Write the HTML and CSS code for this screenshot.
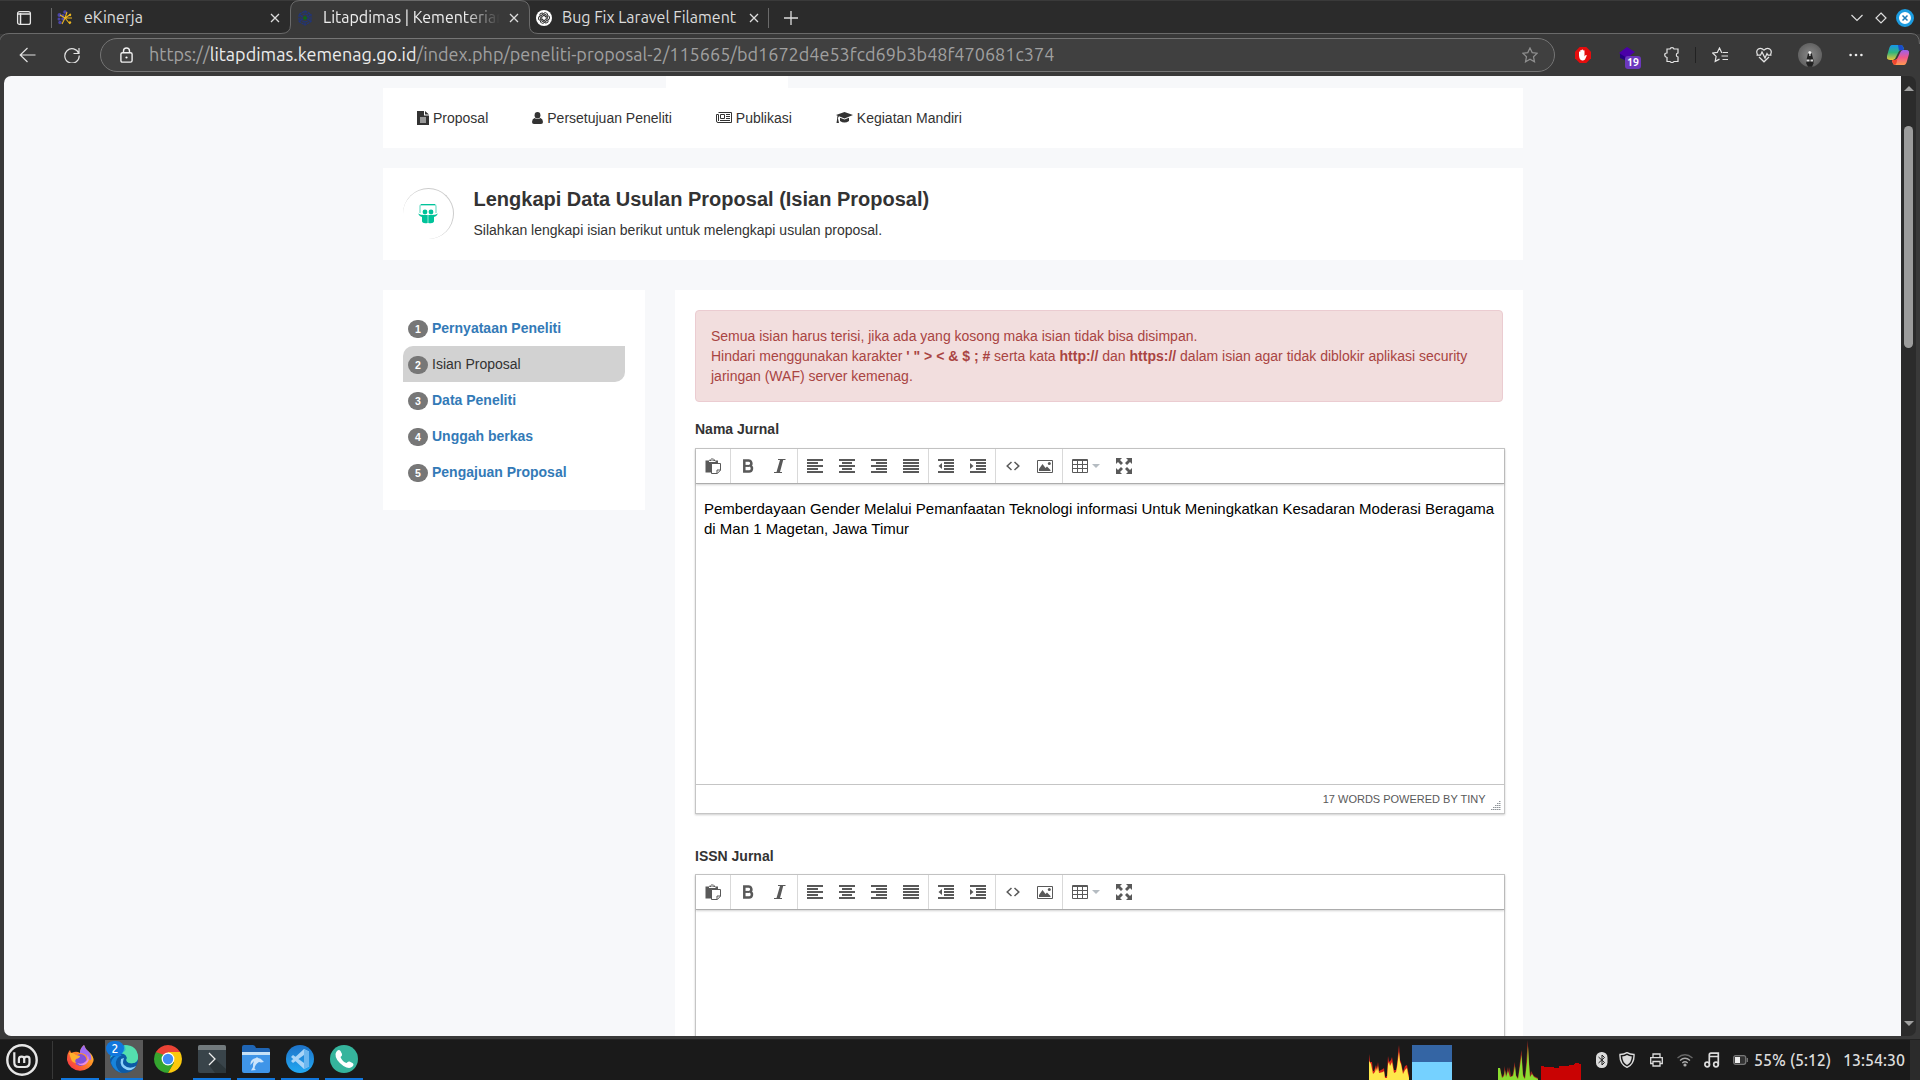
FILE: index.html
```html
<!DOCTYPE html>
<html lang="id">
<head>
<meta charset="utf-8">
<title>Litapdimas | Kementerian</title>
<link rel="stylesheet" href="styles.css">
</head>
<body>
<svg class="defs" width="0" height="0">
  <defs>
    <symbol id="x" viewBox="0 0 10 10"><path d="M1 1l8 8M9 1L1 9" stroke="#ddd" stroke-width="1.3" fill="none"/></symbol>
    <symbol id="paste" viewBox="0 0 16 16"><path d="M.5 2.500h4v-1H6V.5h2.500v1H10v1h3V6H7.500v8.500H.5z" fill="#595959"/><path d="M4 3.500h6.500M6 2h2.500" stroke="#fff"/><path d="M6.500 5.500h9v6.700L12.300 15.500H6.500z" fill="#fff" stroke="#595959"/><path d="M12 15.500V12h3.500" fill="none" stroke="#595959"/></symbol>
    <symbol id="bold" viewBox="0 0 16 16"><path d="M4.300 2.500H8.500a2.800 2.800 0 0 1 1.500 5.200 3 3 0 0 1-1.300 5.800H4.300z M4 13.500" fill="none" stroke="#595959" stroke-width="2.500"/><path d="M4 7.900h5" stroke="#595959" stroke-width="2"/></symbol>
    <symbol id="italic" viewBox="0 0 16 16"><path d="M6 1h7.500v1h-2.300L8 14h2v1H2v-1h2.500L8 2H6z" fill="#595959"/></symbol>
    <symbol id="al" viewBox="0 0 16 16"><path d="M0 2h16M0 5h11M0 8h16M0 11h11M0 14h16" stroke="#595959" stroke-width="2"/></symbol>
    <symbol id="ac" viewBox="0 0 16 16"><path d="M0 2h16M3 5h10M0 8h16M3 11h10M0 14h16" stroke="#595959" stroke-width="2"/></symbol>
    <symbol id="ar" viewBox="0 0 16 16"><path d="M0 2h16M5 5h11M0 8h16M5 11h11M0 14h16" stroke="#595959" stroke-width="2"/></symbol>
    <symbol id="aj" viewBox="0 0 16 16"><path d="M0 2h16M0 5h16M0 8h16M0 11h16M0 14h16" stroke="#595959" stroke-width="2"/></symbol>
    <symbol id="out" viewBox="0 0 16 16"><path d="M0 2h16M6 5h10M6 8h10M6 11h10M0 14h16" stroke="#595959" stroke-width="2"/><path d="M4 5v6L.5 8z" fill="#595959"/></symbol>
    <symbol id="in" viewBox="0 0 16 16"><path d="M0 2h16M6 5h10M6 8h10M6 11h10M0 14h16" stroke="#595959" stroke-width="2"/><path d="M0 5v6l3.500-3z" fill="#595959"/></symbol>
    <symbol id="code" viewBox="0 0 16 16"><path d="M6.500 4L2.200 8l4.300 4M9.500 4l4.300 4-4.300 4" fill="none" stroke="#595959" stroke-width="1.500"/></symbol>
    <symbol id="img" viewBox="0 0 16 16"><path d="M.5 2.500h15v12H.5z" fill="none" stroke="#595959"/><path d="M2 13V11l3.500-5 3 4 1.500-1.500 3.500 3.500V13z" fill="#595959"/><circle cx="12.300" cy="5.500" r="1.500" fill="#595959"/></symbol>
    <symbol id="tbl" viewBox="0 0 16 16"><path d="M.5 1.500h15v13H.5zM.5 2.500h15M.5 6.500h15M.5 10.500h15M5.500 2v12M10.500 2v12" fill="none" stroke="#595959"/></symbol>
    <symbol id="full" viewBox="0 0 16 16"><path d="M0 0h6L4 2l3 3-2 2-3-3-2 2zM16 0v6l-2-2-3 3-2-2 3-3-2-2zM0 16v-6l2 2 3-3 2 2-3 3 2 2zM16 16h-6l2-2-3-3 2-2 3 3 2-2z" fill="#595959"/></symbol>
  </defs>
</svg>

<div class="desktop">
  <header class="tabs">
    <svg class="tab-shape" width="1920" height="44" viewBox="0 0 1920 44"><path d="M-1 44V42Q1 33.500 9 33.500H281Q290.500 33.500 290.500 25V10Q290.500 .5 300 .5H520Q529.500 .5 529.500 10V25Q529.500 33.500 538 33.500H1911Q1919.500 33.500 1919.500 44" fill="#393939" stroke="#6a6a6a"/></svg>
    <svg class="ic panel-ic" viewBox="0 0 16 16"><rect x="1.600" y="1.600" width="12.800" height="12.800" rx="2" fill="none" stroke="#e6e6e6" stroke-width="1.300"/><path d="M2 4h12M4.500 3v11" stroke="#e6e6e6" stroke-width="1.500"/></svg>
    <i class="vsep"></i>
    <svg class="ic kin" viewBox="0 0 16 16"><g fill="#4a45a8"><circle cx="2.500" cy="5" r="2"/><circle cx="2" cy="9" r="1.500"/><circle cx="3" cy="12.500" r="1.700"/><circle cx="8" cy="2" r="1.800"/><circle cx="6" cy="5.500" r="1.500"/><circle cx="6" cy="9" r="1.700"/></g><path d="M8 8l2-6M8 8l6-4M8 8h7M8 8l5 6M8 8l-3 6M8 8L3 5" stroke="#e9b320" stroke-width="1.100"/><circle cx="13" cy="5" r="1.200" fill="#e9b320"/><circle cx="13" cy="12.500" r="1.200" fill="#e9b320"/></svg>
    <span class="tab-t t1">eKinerja</span>
    <svg class="cl c1"><use href="#x"/></svg>
    <svg class="ic lit" viewBox="0 0 16 16"><g fill="none" stroke="#20357c" stroke-width="1.200" stroke-dasharray="2.500 .7"><path d="M8 1l6 3.500v7L8 15l-6-3.500v-7z"/><path d="M8 1v4M14 4.500L10 7M14 11.500L10 9M8 15v-4M2 11.500L6 9M2 4.500L6 7"/><circle cx="8" cy="8" r="4"/></g><circle cx="8" cy="8" r="1.800" fill="#096b18"/></svg>
    <span class="tab-t t2">Litapdimas | Kementerian</span>
    <svg class="cl c2"><use href="#x"/></svg>
    <svg class="ic gpt" viewBox="0 0 16 16"><circle cx="8" cy="8" r="8" fill="#fff"/><g fill="none" stroke="#222" stroke-width=".9"><path id="p" d="M8 3.100a2.300 2.300 0 0 1 3.600 2.200V8.500L8 10.500"/><use href="#p" transform="rotate(60 8 8)"/><use href="#p" transform="rotate(120 8 8)"/><use href="#p" transform="rotate(180 8 8)"/><use href="#p" transform="rotate(240 8 8)"/><use href="#p" transform="rotate(300 8 8)"/></g></svg>
    <span class="tab-t t3">Bug Fix Laravel Filament</span>
    <svg class="cl c3"><use href="#x"/></svg>
    <i class="vsep s2"></i>
    <svg class="plus" viewBox="0 0 14 14"><path d="M7 0v14M0 7h14" stroke="#ddd" stroke-width="1.300"/></svg>
    <div class="win">
      <svg width="12" height="8" viewBox="0 0 12 8"><path d="M.5 1L6 6.500 11.500 1" fill="none" stroke="#ddd" stroke-width="1.200"/></svg>
      <svg width="12" height="12" viewBox="0 0 12 12"><path d="M6 1l5 5-5 5-5-5z" fill="none" stroke="#ddd" stroke-width="1.200"/></svg>
      <svg class="close" width="18" height="18" viewBox="0 0 18 18"><circle cx="9" cy="9" r="7.500" fill="#fff" stroke="#1c9ce0" stroke-width="3"/><path d="M6.500 6.500l5 5M11.500 6.500l-5 5" stroke="#1c7cb8" stroke-width="1.500"/></svg>
    </div>
  </header>

  <div class="toolbar">
    <svg class="back" viewBox="0 0 17 16"><path d="M16.500 8H1.500M8.500 1L1.200 8l7.300 7" fill="none" stroke="#e2e2e2" stroke-width="1.200"/></svg>
    <svg class="reload" viewBox="0 0 16 16"><path d="M14.800 6.500A7.200 7.200 0 1 0 15.200 8.500M15 1v5.500H9.500" fill="none" stroke="#e2e2e2" stroke-width="1.200"/></svg>
    <div class="address">
      <svg class="lock" viewBox="0 0 13 16"><path d="M3.500 5V4a3 3 0 0 1 6 0v1M2.500 5.700h8q1.600 0 1.600 1.600v6.200q0 1.600-1.600 1.600h-8Q.9 15.100.9 13.500V7.300q0-1.600 1.600-1.600z" fill="none" stroke="#f0f0f0" stroke-width="1.400"/><circle cx="6.500" cy="10.500" r="1.100" fill="#fff"/></svg>
      <span class="url">https://<b>litapdimas.kemenag.go.id</b>/index.php/peneliti-proposal-2/115665/bd1672d4e53fcd69b3b48f470681c374</span>
      <svg class="star" viewBox="0 0 16 16"><path d="M8 .9l2.200 4.700 5 .6-3.700 3.500 1 5.100L8 12.300l-4.500 2.500 1-5.100L.8 6.200l5-.6z" fill="none" stroke="#8f8f8f" stroke-width="1.200"/></svg>
    </div>
    <div class="ext">
      <svg class="e1" viewBox="0 0 16 16"><path d="M4.700 0h6.600L16 4.700v6.600L11.300 16H4.700L0 11.300V4.700z" fill="#e40d0d"/><path d="M4 8.500V4.800q.7-.7 1.300 0V8V3.300q.7-.8 1.400 0V7.500V2.800q.7-.8 1.400 0V7.500V3.500q.8-.7 1.400 0V9.500l1.200-1.400q1-.3 1.100.4L10 12.500Q8.500 14 6.500 13.300 4.300 12.500 4 8.500z" fill="#fff"/></svg>
      <span class="e2"><svg width="16" height="14" viewBox="0 0 16 14"><path d="M1 6v5l7 3V7z" fill="#250080"/><path d="M8 0l8 5-8 6-8-5z" fill="#4a00a8"/></svg><em>19</em></span>
      <svg class="e3" viewBox="0 0 16 16"><path d="M3 2h3q.3-1.300 2-1.300T10 2h4v4q-1.700.3-1.700 2T14 10v4.500h-4Q9.500 15.500 8 15.500T6 14.500H3V10.500Q.7 10 .7 8T3 6z" fill="none" stroke="#e4e4e4" stroke-width="1.200"/></svg>
      <i class="e4"></i>
      <svg class="e5" viewBox="0 0 16 16"><path d="M10.500 5.500L9.600 5.400 7.500 1 5.300 5.400.7 6l3.400 3.400-.9 5 4.300-2.300M11 5.500h5M9.500 9H16M10.500 12.500H16" fill="none" stroke="#e4e4e4" stroke-width="1.200"/></svg>
      <svg class="e6" viewBox="0 0 16 16"><path d="M1.500 7.500C-1 3 4-1 8 3.200 12-1 17 3 14.500 7.500M3 10l5 4.800L13 10M.5 8.200h4L6 5l3 6 2-4.500 1 1.700h3.500" fill="none" stroke="#e4e4e4" stroke-width="1.200"/></svg>
      <svg class="e7" viewBox="0 0 24 24"><defs><radialGradient id="av"><stop offset="0" stop-color="#8a8a8a"/><stop offset="1" stop-color="#626262"/></radialGradient></defs><circle cx="12" cy="12" r="12" fill="url(#av)"/><path d="M12 7.500l2 4 1.500 6v3L14 23.800h-4L8.300 20.500v-3l1.500-6z" fill="#222"/><circle cx="11.800" cy="9.500" r="1.500" fill="#eee"/><path d="M8.500 16.500h3v2h-3zM12.500 16.500h2.500v2h-2.500zM11.300 10h1.200v3h-1.200z" fill="#ddd"/></svg>
      <svg class="e8" viewBox="0 0 14 4"><g fill="#eee"><circle cx="1.600" cy="2" r="1.300"/><circle cx="7" cy="2" r="1.300"/><circle cx="12.400" cy="2" r="1.300"/></g></svg>
      <svg class="e9" viewBox="0 0 22 20"><defs><linearGradient id="ca" x2="0" y2="1"><stop offset="0" stop-color="#1596ec"/><stop offset=".5" stop-color="#32b57c"/><stop offset="1" stop-color="#ecc53a"/></linearGradient><linearGradient id="cb" x2="0" y2="1"><stop offset="0" stop-color="#9a62ef"/><stop offset=".5" stop-color="#f0588b"/><stop offset="1" stop-color="#ff9a4f"/></linearGradient></defs><path d="M5 0h9q2 0 3 4l-3 1q-2 0-3 3L9 12q-1 3-3 3H3q-4 0-3-4L2 4Q3 0 5 0z" fill="url(#ca)"/><path d="M17 20H8q-2 0-3-4l3-1q2 0 3-3l2-4q1-3 3-3h3q4 0 3 4l-2 7q-1 4-3 4z" fill="url(#cb)"/><path d="M11 0h3q2 0 3 5h-3q-1.500 0-2 1z" fill="#1b4bc8"/><path d="M5 15h3.500q1 0 2-2l-1 5q-.5 2-2 2Q6 19.500 5 15z" fill="#f0472e"/></svg>
    </div>
  </div>

  <div class="view">
    <main class="page">
      <div class="nub"></div>
      <nav class="card nav">
        <span><svg width="12" height="14" viewBox="0 0 12 14"><path d="M0 0h7v4.500h5V14H0zM8 0l4 3.600H8z" fill="#333"/><path d="M3 7h6M3 9h6M3 11h6" stroke="#fff"/></svg> Proposal</span>
        <span><svg width="11" height="14" viewBox="0 0 11 14"><ellipse cx="5.500" cy="4.300" rx="2.900" ry="3.300" fill="#333"/><path d="M2.500 7q3 2 6 0Q11 8 11 11q0 2-2 2H2q-2 0-2-2Q0 8 2.500 7z" fill="#333"/></svg> Persetujuan Peneliti</span>
        <span><svg width="16" height="14" viewBox="0 0 16 14"><path d="M2.500 1.500h13v10H2q-1.500 0-1.500-1.500V3.500h2V10" fill="none" stroke="#333"/><path d="M4.500 3.500h4v4h-4zM10 3.500h4M10 5.500h4M10 7.500h4M4 9.500h10" fill="none" stroke="#333"/></svg> Publikasi</span>
        <span><svg width="17" height="14" viewBox="0 0 17 14"><path d="M8.500 1L17 4 8.500 7.500 3 5.200Q2 6 2 7.500l1 4.500H.5l.7-4.500Q1 6 1.700 4.700L0 4z" fill="#333"/><path d="M4 6.800L8.500 8.600 13 6.800V10q-4.500 3-9 0z" fill="#333"/></svg> Kegiatan Mandiri</span>
      </nav>
      <section class="card head">
        <div class="round"><svg width="20" height="20" viewBox="0 0 20 20"><path d="M2 9V2.500Q2 .7 3.500.7h13Q18 .7 18 2.500V9" fill="none" stroke="#7ae0cc" stroke-width="1.300"/><path d="M3 .7h14" stroke="#00c39a" stroke-width="1.300"/><circle cx="7" cy="8" r="2.400" fill="#00c39a"/><circle cx="13" cy="8" r="2.400" fill="#00c39a"/><path d="M0 9.500q3 2 9.700 1.500V19q-5.200 1-5.700-1.500V13Q1 12 0 9.500zM20 9.500q-3 2-9.700 1.500V19q5.200 1 5.700-1.500V13q3-1 4-3.500z" fill="#00c39a"/></svg></div>
        <div><h1>Lengkapi Data Usulan Proposal (Isian Proposal)</h1><p>Silahkan lengkapi isian berikut untuk melengkapi usulan proposal.</p></div>
      </section>
      <div class="cols">
        <aside class="card steps">
          <a><i>1</i>Pernyataan Peneliti</a>
          <a class="on"><i>2</i>Isian Proposal</a>
          <a><i>3</i>Data Peneliti</a>
          <a><i>4</i>Unggah berkas</a>
          <a><i>5</i>Pengajuan Proposal</a>
        </aside>
        <section class="card form">
          <div class="alert">Semua isian harus terisi, jika ada yang kosong maka isian tidak bisa disimpan.<br>Hindari menggunakan karakter <b>' " &gt; &lt; &amp; $ ; #</b> serta kata <b>http://</b> dan <b>https://</b> dalam isian agar tidak diblokir aplikasi security jaringan (WAF) server kemenag.</div>
          <label>Nama Jurnal</label>
          <div class="editor">
            <div class="bar">
              <div><svg><use href="#paste"/></svg></div>
              <div><svg><use href="#bold"/></svg><svg><use href="#italic"/></svg></div>
              <div><svg><use href="#al"/></svg><svg><use href="#ac"/></svg><svg><use href="#ar"/></svg><svg><use href="#aj"/></svg></div>
              <div><svg><use href="#out"/></svg><svg><use href="#in"/></svg></div>
              <div><svg><use href="#code"/></svg><svg><use href="#img"/></svg></div>
              <div><svg><use href="#tbl"/></svg><i class="caret"></i><svg><use href="#full"/></svg></div>
            </div>
            <div class="text">Pemberdayaan Gender Melalui Pemanfaatan Teknologi informasi Untuk Meningkatkan Kesadaran Moderasi Beragama di Man 1 Magetan, Jawa Timur</div>
            <div class="status"><span>17 WORDS POWERED BY TINY</span><svg width="10" height="10" viewBox="0 0 10 10"><path d="M8 .5h2M6 2.500h4M4 4.500h6M2 6.500h8M0 8.500h10" stroke="#8f9499" stroke-dasharray="1.500 .5"/></svg></div>
          </div>
          <label class="second">ISSN Jurnal</label>
          <div class="editor">
            <div class="bar">
              <div><svg><use href="#paste"/></svg></div>
              <div><svg><use href="#bold"/></svg><svg><use href="#italic"/></svg></div>
              <div><svg><use href="#al"/></svg><svg><use href="#ac"/></svg><svg><use href="#ar"/></svg><svg><use href="#aj"/></svg></div>
              <div><svg><use href="#out"/></svg><svg><use href="#in"/></svg></div>
              <div><svg><use href="#code"/></svg><svg><use href="#img"/></svg></div>
              <div><svg><use href="#tbl"/></svg><i class="caret"></i><svg><use href="#full"/></svg></div>
            </div>
            <div class="text"></div>
          </div>
        </section>
      </div>
    </main>
    <div class="scroll"><i class="up"></i><i class="thumb"></i><i class="down"></i></div>
  </div>

  <footer class="task">
    <svg class="mint" viewBox="0 0 32 32"><circle cx="16" cy="16" r="14.700" fill="none" stroke="#e6e6e6" stroke-width="2.400"/><path d="M8.300 8.300V18.500q0 4.500 4.500 4.500H19q4.500 0 4.500-4.500V15q0-2.300-2.600-2.300T18.200 15V19M18.200 15q0-2.300-2.600-2.300T12.900 15V19" fill="none" stroke="#e6e6e6" stroke-width="2.200"/></svg>
    <i class="tsep"></i>
    <div class="apps">
      <div class="app run"><svg viewBox="0 0 28 28"><defs><linearGradient id="ff" x1="1" x2="0" y2="1"><stop offset="0" stop-color="#ffd83a"/><stop offset=".45" stop-color="#ff8a25"/><stop offset="1" stop-color="#f5224f"/></linearGradient></defs><path d="M1 14Q1 8 4 5l1 3 3-1q3-1 6 1Q14 3 18 0q1 4 5 7 5 4 4.500 9A13.500 12.500 0 0 1 1 15z" fill="url(#ff)"/><path d="M14 8Q14 3 18 0q1 4 5 7 3 4 2 8-3 0-5-5-3-2-6-2z" fill="#a06af2"/><circle cx="14.500" cy="15" r="6" fill="#8350d8"/><path d="M3 8q4-1 7 2l4 1q0 2-4 3-2 3 1 4-5 0-6-4z" fill="#ffb02e"/><path d="M21 9q4 6-1 10-5 3-9-1 5 2 8-1 4-3 2-8z" fill="#e98ce0"/></svg></div>
      <div class="app run cur"><svg viewBox="0 0 28 28"><defs><linearGradient id="ed" x2="1" y2="1"><stop offset="0" stop-color="#1aa5e8"/><stop offset="1" stop-color="#4be0a0"/></linearGradient></defs><circle cx="14" cy="14" r="14" fill="#0c5aa6"/><path d="M7 3Q16-3 24 4q6 6 3 12-2 3-8 2-4-2-2-5-1-5-8-4-7 1-9 5Q1 7 7 3z" fill="url(#ed)"/><path d="M14 0q14 0 14 13-1 6-8 5-5-1-3-5-1-4-5-5 6-3 2-8z" fill="#54dfae"/><path d="M11 14q-2 8 6 11 6 1 9-4-7 4-12-1-2-2 0-7z" fill="#8ed0fa"/><path d="M1 18Q3 9 12 10q-7 3-6 10 1 5 6 8Q4 26 1 18z" fill="#1784dc"/></svg><em>2</em></div>
      <div class="app"><svg viewBox="0 0 28 28"><path d="M14 14L1.900 7A14 14 0 0 1 26.100 7z" fill="#ea4335"/><path d="M14 14L1.900 7A14 14 0 0 0 14 28l6-10.500z" fill="#34a52f"/><path d="M14 14V7h12.100A14 14 0 0 1 14 28l6-10.500z" fill="#fbc90d"/><path d="M2 7l6 10 6-10z" fill="#ea4335"/><path d="M1.900 7l6 10.500L10 10z" fill="#34a52f"/><circle cx="14" cy="14" r="6.400" fill="#fff"/><circle cx="14" cy="14" r="5.200" fill="#3f8cf5"/></svg></div>
      <div class="app run"><svg viewBox="0 0 28 28"><rect width="28" height="28" rx="2" fill="#39444a"/><path d="M0 5V2q0-2 2-2h24q2 0 2 2v3z" fill="#727a7d"/><path d="M17 14l11 10v4H17l-6-8z" fill="#2c363a"/><path d="M11 8l6 6-6 6" fill="none" stroke="#eee" stroke-width="1.300"/></svg></div>
      <div class="app run"><svg viewBox="0 0 28 28"><path d="M0 2q0-2 2-2h9q2 0 3 3h12q2 0 2 2v8H0z" fill="#1f65b4"/><path d="M0 10V7h28v3z" fill="#c6e2f8"/><path d="M0 10h28v16q0 2-2 2H2q-2 0-2-2z" fill="#3f95e8"/><path d="M8.500 20Q8 14 14 13l1-1 1 1q3 0 4.500 2.500l1.500 1.500-3 .5-2-.5q-4 2-4.500 6.500l1.500 1.500-5 .5 2-3.500q0-4 1-6z" fill="#cbe4fb"/></svg></div>
      <div class="app run"><svg viewBox="0 0 28 28"><defs><linearGradient id="vs" x2="0" y2="1"><stop offset="0" stop-color="#1d72c8"/><stop offset="1" stop-color="#23a9f2"/></linearGradient></defs><circle cx="14" cy="14" r="14" fill="url(#vs)"/><path d="M18 4l5 2.500v15L18 24 5 12l2-2 11 8V10L7 18l-2-2z" fill="#a9d4f7"/><path d="M18 4l5 2.500v15L18 24z" fill="#6db7ef"/></svg></div>
      <div class="app run"><svg viewBox="0 0 28 28"><circle cx="14" cy="14" r="14" fill="#35b49c"/><path d="M7 6q2-2 3.500 0L12 9q.5 2-1.500 3 2 5 6 6 1.500-2 3-1.500l3 1.500q2 1.500 0 3.500-3 3-9-.5Q5 15 5.500 9 6 7 7 6z" fill="#fff"/></svg></div>
    </div>
    <div class="tray">
      <svg class="g1" width="40" height="40" viewBox="0 0 40 40"><path d="M0 40V14L1 22H3L4 31 5 31 7 25 8 29 9 22 10 31 14 29 15 28 16 37 18 36 19 16 20 22 22 20 23 17 25 30 27 30 28 24 30 5 31 20 32 22 34 32 36 26 38 25 39 31 40 35V40z" fill="#d8261a"/><path d="M0 40V21L2 24 4 34 6 32 7 28 8 31 9 26 10 33 14 32 15 31 16 38 18 38 19 24 20 22 21 26 23 22 25 33 27 32 28 27 30 12 31 22 32 24 34 34 36 30 38 28 39 34 40 38V40z" fill="#ffe84a"/></svg>
      <div class="g2"></div>
      <svg class="g3" width="40" height="40" viewBox="0 0 40 40"><path d="M0 40V28H2L4 37 6 34 6.500 26 8 36 10 27 11 34 11.500 27 13 37 15 34 16.500 22 18 35 20 38 23 13 23.500 10 25 34 27 38 29 12 29.500 0 31 20 32 36 33 31 36 36 40 38V40z" fill="#a02b20"/><path d="M0 40V28H2L4 38 6 36 7 30 8 37 10 31 12 37 15 36 17 26 18 36 20 39 22 26 23.500 15 25 36 27 39 29 22 30 6 31 24 32 37 34 34 36 37 40 39V40z" fill="#8bdd30"/></svg>
      <svg class="g4" width="40" height="40" viewBox="0 0 40 40"><path d="M0 40V26h3v1h10v1h5v-2h3l7 0v-1h5v-1h1v-1h4v1h2v16z" fill="#c90303"/></svg>
      <svg class="i1" width="12" height="16" viewBox="0 0 12 16"><rect width="11.500" height="16" rx="5.500" fill="#dcdcdc"/><path d="M2.500 5l6 5.500L6 13V3l2.500 2.500-6 5.500" fill="none" stroke="#222"/></svg>
      <svg class="i2" width="16" height="16" viewBox="0 0 16 16"><path d="M8 .7Q11 2.500 15 2.500 15.500 12 8 15.300.5 12 1 2.500 5 2.500 8 .7z" fill="none" stroke="#dcdcdc" stroke-width="1.400"/><path d="M8 3q2 1.300 4.800 1.500Q12.500 10.500 8 13 3.500 10.500 3.200 4.500 6 4.300 8 3z" fill="#dcdcdc"/></svg>
      <svg class="i3" width="13" height="14" viewBox="0 0 13 14"><path d="M3 4V1h7v3M3 10.500H.7V4.700h11.600v5.800H10M3 8.500h7V13H3z" fill="none" stroke="#dcdcdc" stroke-width="1.300"/></svg>
      <svg class="i4" width="16" height="14" viewBox="0 0 16 14"><g fill="none" stroke-width="1.300"><path d="M.5 5Q8-1.500 15.500 5" stroke="#666"/><path d="M3 7.500q5-4.500 10 0M5.300 10q2.700-2.500 5.400 0" stroke="#aaa"/></g><circle cx="8" cy="12" r="1.600" fill="#aaa"/></svg>
      <svg class="i5" width="16" height="16" viewBox="0 0 16 16"><path d="M5.300 12.500V3Q5.300 1.200 7 1.200h7.300v11.300M5.300 4.500h9" fill="none" stroke="#dcdcdc" stroke-width="1.700"/><circle cx="3.200" cy="12.500" r="2.300" fill="none" stroke="#dcdcdc" stroke-width="1.700"/><circle cx="12" cy="12.500" r="2.300" fill="none" stroke="#dcdcdc" stroke-width="1.700"/></svg>
      <svg class="i6" width="15" height="10" viewBox="0 0 15 10"><rect x=".7" y=".7" width="12" height="8.600" rx="2" fill="#333" stroke="#777" stroke-width="1.300"/><path d="M2 2h5v6H2z" fill="#eee"/><path d="M14.300 3v4" stroke="#777" stroke-width="1.300"/></svg>
      <span class="bat">55% (5:12)</span>
      <span class="clock">13:54:30</span>
      <i class="edge"></i>
    </div>
  </footer>
</div>
</body>
</html>
```
FILE: styles.css
```css
* { box-sizing: border-box; }
body { margin: 0; font: 14px/20px "Liberation Sans", Arial, sans-serif; color: #333; background: #393939; overflow: hidden; }
svg { display: block; flex: none; }
i, em { font-style: normal; flex: none; }
.defs { position: absolute; }
.desktop { width: 1920px; height: 1080px; display: flex; flex-direction: column; overflow: hidden; }

/* browser tabs */
.tabs { position: relative; height: 34px; flex: none; display: flex; align-items: center; padding-left: 16px; background: #2b2b2b; border-top: 1px solid #3a3a3a; color: #dcdcdc; font: 16px/20px Ubuntu, "Noto Sans", sans-serif; }
.tabs > * { position: relative; flex: none; }
.tabs > .tab-shape { position: absolute; left: 0; top: -1px; }
.ic { width: 16px; height: 16px; }
.vsep { width: 1px; height: 20px; background: #6a6a6a; margin-left: 19px; }
.kin { margin-left: 5px; }
.lit { margin-left: 17px; }
.gpt { margin-left: 17px; }
.tab-t { white-space: nowrap; overflow: hidden; padding-bottom: 2px; }
.t1 { width: 186px; margin-left: 11px; }
.t2 { width: 177px; margin-left: 10px; color: #eee; -webkit-mask-image: linear-gradient(90deg, #000 80%, transparent); mask-image: linear-gradient(90deg, #000 80%, transparent); }
.t3 { width: 187px; margin-left: 10px; }
.cl { width: 10px; height: 10px; }
.c2 { margin-left: 9px; }
.s2 { margin-left: 9px; }
.plus { width: 14px; height: 14px; margin-left: 15px; }
.win { margin-left: auto; display: flex; align-items: center; gap: 12px; padding-right: 6px; }
.close { margin-left: -3px; }

/* address row */
.toolbar { position: relative; z-index: 1; height: 42px; flex: none; display: flex; align-items: center; padding: 0 11px 0 19px; }
.back { width: 17px; height: 16px; }
.reload { width: 16px; height: 16px; margin-left: 28px; }
.address { width: 1455px; height: 34px; margin-left: 20px; display: flex; align-items: center; border: 1px solid #757575; border-radius: 17px; background: #404040; padding: 0 16px 0 19px; }
.lock { width: 13px; height: 16px; }
.url { margin-left: 16px; padding-bottom: 2px; white-space: nowrap; font: 18px/24px Ubuntu, "Noto Sans", sans-serif; letter-spacing: .02px; color: #a0a0a0; }
.url b { font-weight: 400; color: #ececec; }
.star { width: 16px; height: 16px; margin-left: auto; }
.ext { flex: 1; display: flex; align-items: center; margin-left: 20px; }
.e1 { width: 16px; height: 16px; }
.e2 { position: relative; width: 16px; height: 16px; margin-left: 28px; }
.e2 em { position: absolute; left: 6px; top: 9px; width: 16px; height: 13px; border-radius: 3px; background: #6c38bd; color: #fff; font: bold 10.500px/13px Ubuntu, "Noto Sans", sans-serif; text-align: center; }
.e3 { width: 16px; height: 16px; margin-left: 29px; }
.e4 { width: 1px; height: 16px; background: #222; margin-left: 15px; }
.e5 { width: 16px; height: 16px; margin-left: 16px; }
.e6 { width: 16px; height: 16px; margin-left: 28px; }
.e7 { width: 24px; height: 24px; margin-left: 26px; }
.e8 { width: 14px; height: 4px; margin-left: 27px; }
.e9 { width: 22px; height: 20px; margin-left: 24px; }

/* viewport */
.view { height: 960px; flex: none; margin: 0 4px; display: flex; border-radius: 7px; overflow: hidden; background: #2b2b2b; }
.page { width: 1897px; height: 960px; background: #f7f8fa; padding: 0 378px 0 379px; overflow: hidden; display: flex; flex-direction: column; }
.scroll { width: 15px; display: flex; flex-direction: column; align-items: center; padding: 10px 0; }
.up { border: 5px solid transparent; border-top: 0; border-bottom: 5px solid #a0a0a0; }
.down { border: 5px solid transparent; border-bottom: 0; border-top: 5px solid #a0a0a0; margin-top: auto; }
.thumb { width: 9px; height: 222px; border-radius: 5px; background: #9c9c9c; margin-top: 35px; }
.card { background: #fff; }
.nub { width: 122px; height: 12px; flex: none; margin-left: 283px; background: #fff; }
.nav { height: 60px; flex: none; display: flex; padding: 20px 0 0 34px; gap: 44px; }
.nav span { display: flex; align-items: center; height: 20px; gap: 4px; }
.head { height: 92px; flex: none; margin-top: 20px; padding: 20px; display: flex; gap: 19.500px; }
.round { width: 51px; height: 51px; border: 0 solid #ccc; border-top-width: 1px; border-right-width: 1px; border-radius: 50%; display: flex; align-items: center; justify-content: center; }
.head h1 { margin: 0; font-size: 20px; line-height: 22px; }
.head p { margin: 10px 0 0; }
.cols { display: flex; gap: 30px; margin-top: 30px; align-items: flex-start; }
.steps { width: 262px; height: 220px; padding: 20px; }
.steps a { display: flex; align-items: center; height: 36px; padding-left: 5px; font-weight: bold; color: #337ab7; }
.steps i { width: 20px; height: 18px; margin: 2px 4px 0 0; border-radius: 10px; background: #777; color: #fff; font: bold 10.500px/18px "Liberation Sans", sans-serif; text-align: center; }
.steps .on { background: #d2d2d2; border-radius: 10px 0; font-weight: 400; color: #333; }
.form { width: 848px; height: 1000px; padding: 20px 18px 20px 20px; }
.alert { width: 808px; height: 92px; padding: 15px; border: 1px solid #ebccd1; border-radius: 4px; background: #f2dede; color: #a94442; }
label { display: block; font-weight: bold; margin: 17px 0 9px; height: 20px; }
label.second { margin: 32px 0 8px; }
.editor { width: 810px; height: 366px; border: 1px solid #c5c5c5; box-shadow: 0 1px 2px rgba(0,0,0,.2); display: flex; flex-direction: column; }
.bar { height: 35px; flex: none; display: flex; border-bottom: 1px solid #acacac; box-shadow: 0 1px 2px rgba(0,0,0,.18); }
.bar div { display: flex; align-items: center; padding: 0 1px; border-left: 1px solid #d9d9d9; }
.bar div:first-child { border-left: 0; }
.bar svg { width: 16px; height: 16px; margin: 0 8px; }
.caret { border: 4px solid transparent; border-top-color: #b5bcc2; border-bottom: 0; margin: 0 8px 0 -4px; }
.text { flex: 1; padding: 15px 8px 0; font-size: 15px; line-height: 20px; color: #000; }
.status { height: 29px; flex: none; border-top: 1px solid #c5c5c5; display: flex; justify-content: flex-end; font-size: 11px; line-height: 29px; color: #595959; }
.status svg { margin: 16px 3px 0 5.500px; }

/* taskbar */
.task { height: 41px; margin-top: 3px; flex: none; background: #1a1a1a; border-top: 1px solid #222; display: flex; padding-left: 6px; }
.mint { width: 32px; height: 32px; margin-top: 4px; }
.tsep { width: 1px; height: 38px; margin: 1px 8px 0 14px; background: #383838; }
.apps { display: flex; gap: 6px; }
.app { position: relative; width: 38px; height: 40px; padding: 5px; }
.app svg { width: 28px; height: 28px; }
.run { border-bottom: 2px solid #1177dd; }
.cur { background: #585858; }
.app em { position: absolute; left: 1px; top: 1px; width: 18px; height: 15px; border-radius: 8px; background: #1177dd; color: #fff; font: 500 12px/15px Ubuntu, "Noto Sans", sans-serif; text-align: center; }
.tray { margin-left: auto; display: flex; align-items: center; color: #dcdcdc; font: 500 16px/20px Ubuntu, "Noto Sans", sans-serif; white-space: nowrap; }
.g2 { width: 40px; height: 35px; margin: 5px 46px 0 3px; background: linear-gradient(#3465a4 17px, #75d1ff 17px); }
.g4 { margin-left: 3px; }
.i1 { margin-left: 15px; }
.i2 { margin-left: 11px; }
.i3 { margin-left: 15px; }
.i4 { margin-left: 14px; }
.i5 { margin-left: 11px; }
.i6 { margin-left: 13px; }
.bat { width: 89px; margin-left: 6px; padding-bottom: 1px; }
.clock { width: 67px; padding-bottom: 1px; }
.edge { width: 10px; height: 40px; background: #2b2b2b; }
```
